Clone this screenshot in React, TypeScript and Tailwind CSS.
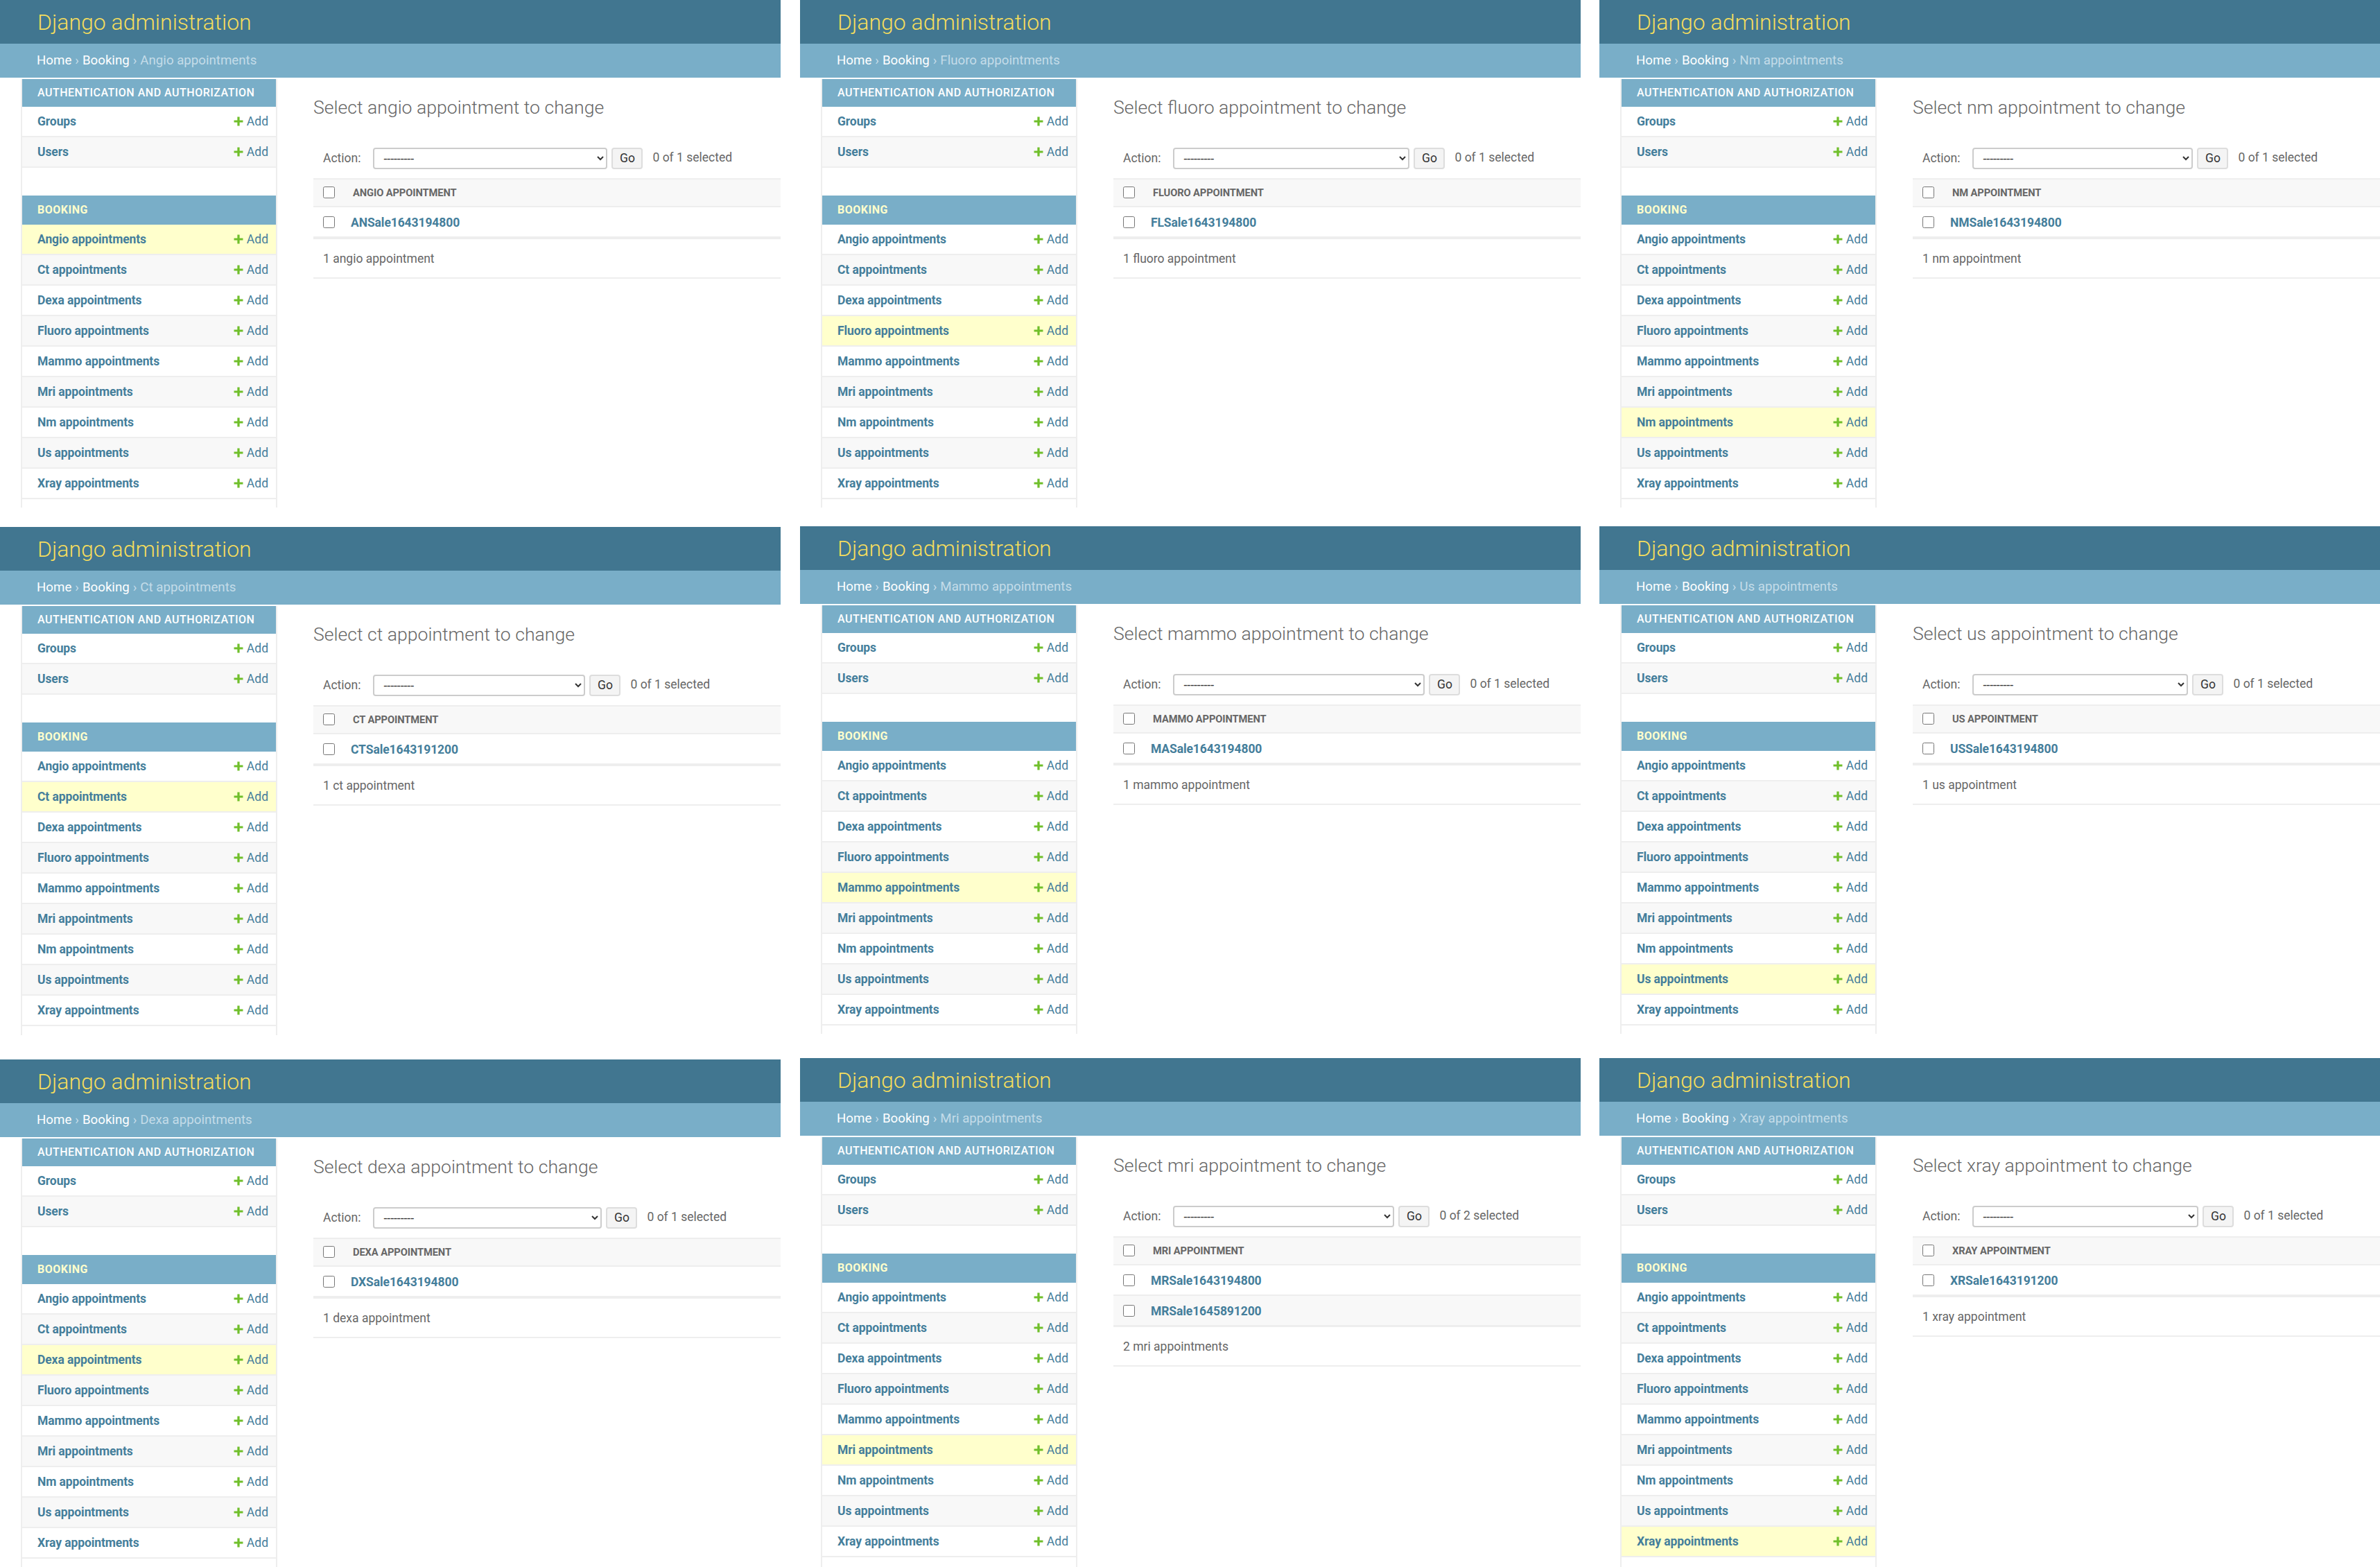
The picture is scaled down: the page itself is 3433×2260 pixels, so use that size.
const appLinks = ["Angio", "Ct", "Dexa", "Fluoro", "Mammo", "Mri", "Nm", "Us", "Xray"];

type Panel = {
  name: string;
  selectClass: string;
  sales: string[];
  heightClass: string;
};

const columns: { className: string; panels: Panel[] }[] = [
  {
    className: "mr-[28px]",
    panels: [
      { name: "Angio", selectClass: "w-[338px]", sales: ["ANSale1643194800"], heightClass: "h-[732px] mb-[28px]" },
      { name: "Ct", selectClass: "w-[306px]", sales: ["CTSale1643191200"], heightClass: "h-[733px] mb-[35px]" },
      { name: "Dexa", selectClass: "w-[330px]", sales: ["DXSale1643194800"], heightClass: "h-[732px]" },
    ],
  },
  {
    className: "mr-[27px]",
    panels: [
      { name: "Fluoro", selectClass: "w-[341px]", sales: ["FLSale1643194800"], heightClass: "h-[732px] mb-[27px]" },
      { name: "Mammo", selectClass: "w-[363px]", sales: ["MASale1643194800"], heightClass: "h-[732px] mb-[35px]" },
      { name: "Mri", selectClass: "w-[319px]", sales: ["MRSale1643194800", "MRSale1645891200"], heightClass: "h-[734px]" },
    ],
  },
  {
    className: "",
    panels: [
      { name: "Nm", selectClass: "w-[318px]", sales: ["NMSale1643194800"], heightClass: "h-[732px] mb-[27px]" },
      { name: "Us", selectClass: "w-[311px]", sales: ["USSale1643194800"], heightClass: "h-[732px] mb-[35px]" },
      { name: "Xray", selectClass: "w-[326px]", sales: ["XRSale1643191200"], heightClass: "h-[734px]" },
    ],
  },
];

function AddLink() {
  return (
    <span className="flex items-center text-[17.5px] text-[#447e9b]">
      <svg viewBox="0 0 13 13" className="w-[14px] h-[14px] mr-[5px]" fill="#70bf2b">
        <path d="M5 0.5h3v4.5h4.5v3H8v4.5H5V8H0.5V5H5z" />
      </svg>
      Add
    </span>
  );
}

function SideRow({ label, active, alt }: { label: string; active?: boolean; alt?: boolean }) {
  return (
    <div
      className={
        "flex items-center justify-between h-[44px] pl-[22px] pr-[11px] border-b-2 border-[#eeeeee] " +
        (active ? "bg-[#ffffcc]" : alt ? "bg-[#f8f8f8]" : "bg-white")
      }
    >
      <span className="text-[17.5px] font-bold tracking-[-0.1px] text-[#447e9b]">{label}</span>
      <AddLink />
    </div>
  );
}

function Sidebar({ current }: { current: string }) {
  return (
    <aside className="w-[370px] shrink-0 ml-[30px] mt-[2px] border-x-2 border-[#eeeeee]">
      <div className="flex items-center h-[40px] pl-[22px] bg-[#79aec8] text-[16px] font-medium tracking-[0.5px] text-white">
        AUTHENTICATION AND AUTHORIZATION
      </div>
      <SideRow label="Groups" />
      <SideRow label="Users" alt />
      <div className="flex items-center h-[42px] mt-[40px] pl-[22px] pb-[1px] bg-[#79aec8] text-[16px] font-bold tracking-[0.5px] text-[#ffffcc]">
        BOOKING
      </div>
      {appLinks.map((name, i) => (
        <SideRow key={name} label={`${name} appointments`} active={name === current} alt={i % 2 === 1} />
      ))}
      <div className="h-[60px]" />
    </aside>
  );
}

function ChangeList({ panel }: { panel: Panel }) {
  const lower = panel.name.toLowerCase();
  const count = panel.sales.length;
  return (
    <main className="flex-1 min-w-0 ml-[52px] text-[#666666]">
      <h1 className="mt-[25px] h-[36px] leading-[36px] text-[26.6px] font-light">Select {lower} appointment to change</h1>
      <div className="flex items-center mt-[40px] h-[31px] pl-[14px] text-[17.5px]">
        <span className="mr-[18px]">Action:</span>
        <select
          className={`${panel.selectClass} h-[31px] pl-[9px] border-2 border-[#cccccc] rounded-[4px] bg-white text-[17.5px] text-[#333333]`}
        >
          <option>---------</option>
        </select>
        <button className="ml-[6px] w-[45px] h-[31px] border-2 border-[#dddddd] rounded-[4px] bg-[#f4f4f4] text-[17.5px] text-[#333333]">
          Go
        </button>
        <span className="ml-[14px] -mt-[2px]">0 of {count} selected</span>
      </div>
      <div className="flex items-center mt-[13px] h-[42px] pl-[14px] border-y-2 border-[#eeeeee] bg-[#f8f8f8]">
        <input type="checkbox" className="w-[17px] h-[17px] -mt-[2px]" />
        <span className="ml-[26px] text-[14.7px] font-bold tracking-[-0.1px]">{panel.name.toUpperCase()} APPOINTMENT</span>
      </div>
      {panel.sales.map((sale, i) => (
        <div
          key={sale}
          className={
            "flex items-center pl-[14px] " +
            (i % 2 === 1 ? "bg-[#f8f8f8] border-b-[3px] h-[45px] border-[#eeeeee]" : "bg-white") +
            (count === 1 ? " border-b-[4px] h-[46px] border-[#eeeeee]" : "") +
            (i === 0 && count > 1 ? " border-b-2 h-[44px] border-[#eeeeee]" : "")
          }
        >
          <input type="checkbox" className="w-[17px] h-[17px]" />
          <a className="ml-[23px] pt-[2px] text-[17.5px] font-bold tracking-[-0.1px] text-[#447e9b]">{sale}</a>
        </div>
      ))}
      <div className="flex items-center h-[57px] pl-[14px] pt-[2px] border-b-2 border-[#eeeeee] text-[17.5px]">
        {count} {lower} appointment{count > 1 ? "s" : ""}
      </div>
    </main>
  );
}

function AdminPanel({ panel }: { panel: Panel }) {
  return (
    <section className={`${panel.heightClass} overflow-hidden flex flex-col`}>
      <header className="flex items-center h-[63px] shrink-0 pl-[54px] bg-[#417690] text-[32px] font-light text-[#f5dd5d]">
        Django administration
      </header>
      <nav className="flex items-center h-[49px] shrink-0 pl-[53px] bg-[#79aec8] text-[18.7px] text-[#c4dce8]">
        <span className="text-white">Home</span>
        <span className="mx-[5px]">›</span>
        <span className="text-white">Booking</span>
        <span className="mx-[5px]">›</span>
        <span>{panel.name} appointments</span>
      </nav>
      <div className="flex">
        <Sidebar current={panel.name} />
        <ChangeList panel={panel} />
      </div>
    </section>
  );
}

export default function App() {
  return (
    <div className="flex w-[3433px] h-[2260px] overflow-hidden bg-white font-[family-name:Roboto,sans-serif]">
      {columns.map((col, i) => (
        <div key={i} className={`w-[1126px] shrink-0 ${col.className}`}>
          {col.panels.map((panel) => (
            <AdminPanel key={panel.name} panel={panel} />
          ))}
        </div>
      ))}
    </div>
  );
}
